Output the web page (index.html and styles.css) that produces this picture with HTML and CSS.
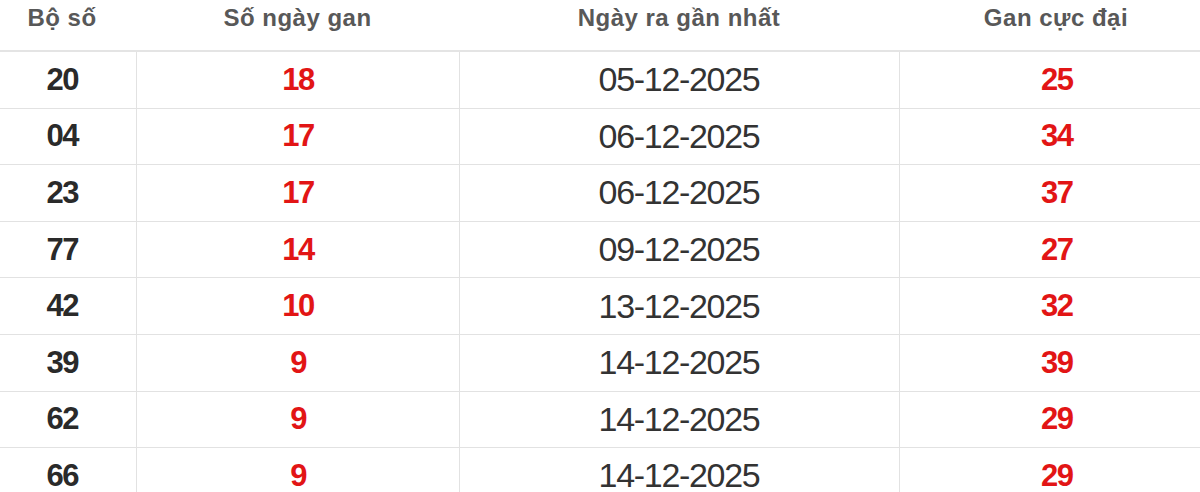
FILE: index.html
```html
<!DOCTYPE html>
<html lang="vi">
<head>
<meta charset="utf-8">
<title>Lô gan</title>
<link rel="stylesheet" href="styles.css">
</head>
<body>
<table class="gan-table">
  <thead>
    <tr>
      <th class="c1">Bộ số</th>
      <th class="c2">Số ngày gan</th>
      <th class="c3">Ngày ra gần nhất</th>
      <th class="c4">Gan cực đại</th>
    </tr>
  </thead>
  <tbody>
    <tr><td class="num">20</td><td class="red">18</td><td class="date">05-12-2025</td><td class="red">25</td></tr>
    <tr><td class="num">04</td><td class="red">17</td><td class="date">06-12-2025</td><td class="red">34</td></tr>
    <tr><td class="num">23</td><td class="red">17</td><td class="date">06-12-2025</td><td class="red">37</td></tr>
    <tr><td class="num">77</td><td class="red">14</td><td class="date">09-12-2025</td><td class="red">27</td></tr>
    <tr><td class="num">42</td><td class="red">10</td><td class="date">13-12-2025</td><td class="red">32</td></tr>
    <tr><td class="num">39</td><td class="red">9</td><td class="date">14-12-2025</td><td class="red">39</td></tr>
    <tr><td class="num">62</td><td class="red">9</td><td class="date">14-12-2025</td><td class="red">29</td></tr>
    <tr><td class="num">66</td><td class="red">9</td><td class="date">14-12-2025</td><td class="red">29</td></tr>
  </tbody>
</table>
</body>
</html>
```

FILE: styles.css
```css
html, body {
  margin: 0;
  padding: 0;
  background: #ffffff;
  overflow: hidden;
}

body {
  font-family: "Liberation Sans", Arial, sans-serif;
}

.gan-table {
  border-collapse: collapse;
  table-layout: fixed;
  width: 1225px;
  margin-left: -12px;
}

.gan-table .c1 { width: 148px; }
.gan-table .c2 { width: 323px; }
.gan-table .c3 { width: 440px; }
.gan-table .c4 { width: 314px; }

.gan-table th {
  height: 49px;
  padding: 0 0 14px 0;
  box-sizing: border-box;
  line-height: 36px;
  vertical-align: top;
  font-size: 24px;
  font-weight: bold;
  letter-spacing: 0.5px;
  color: #585858;
  text-align: center;
  border-bottom: 2px solid #e4e4e4;
}

.gan-table td {
  height: 55.6px;
  padding: 0;
  text-align: center;
  vertical-align: middle;
  border-bottom: 1px solid #e2e2e2;
  border-left: 1px solid #e2e2e2;
}

.gan-table td:first-child {
  border-left: none;
}

.gan-table .num {
  font-size: 31px;
  font-weight: bold;
  letter-spacing: -1.5px;
  text-indent: 1px;
  color: #2a2a2a;
}

.gan-table .red {
  font-size: 31px;
  font-weight: bold;
  letter-spacing: -1.5px;
  text-indent: 1px;
  color: #e21515;
}

.gan-table .date {
  font-size: 34px;
  letter-spacing: -1.3px;
  color: #333333;
}
```
